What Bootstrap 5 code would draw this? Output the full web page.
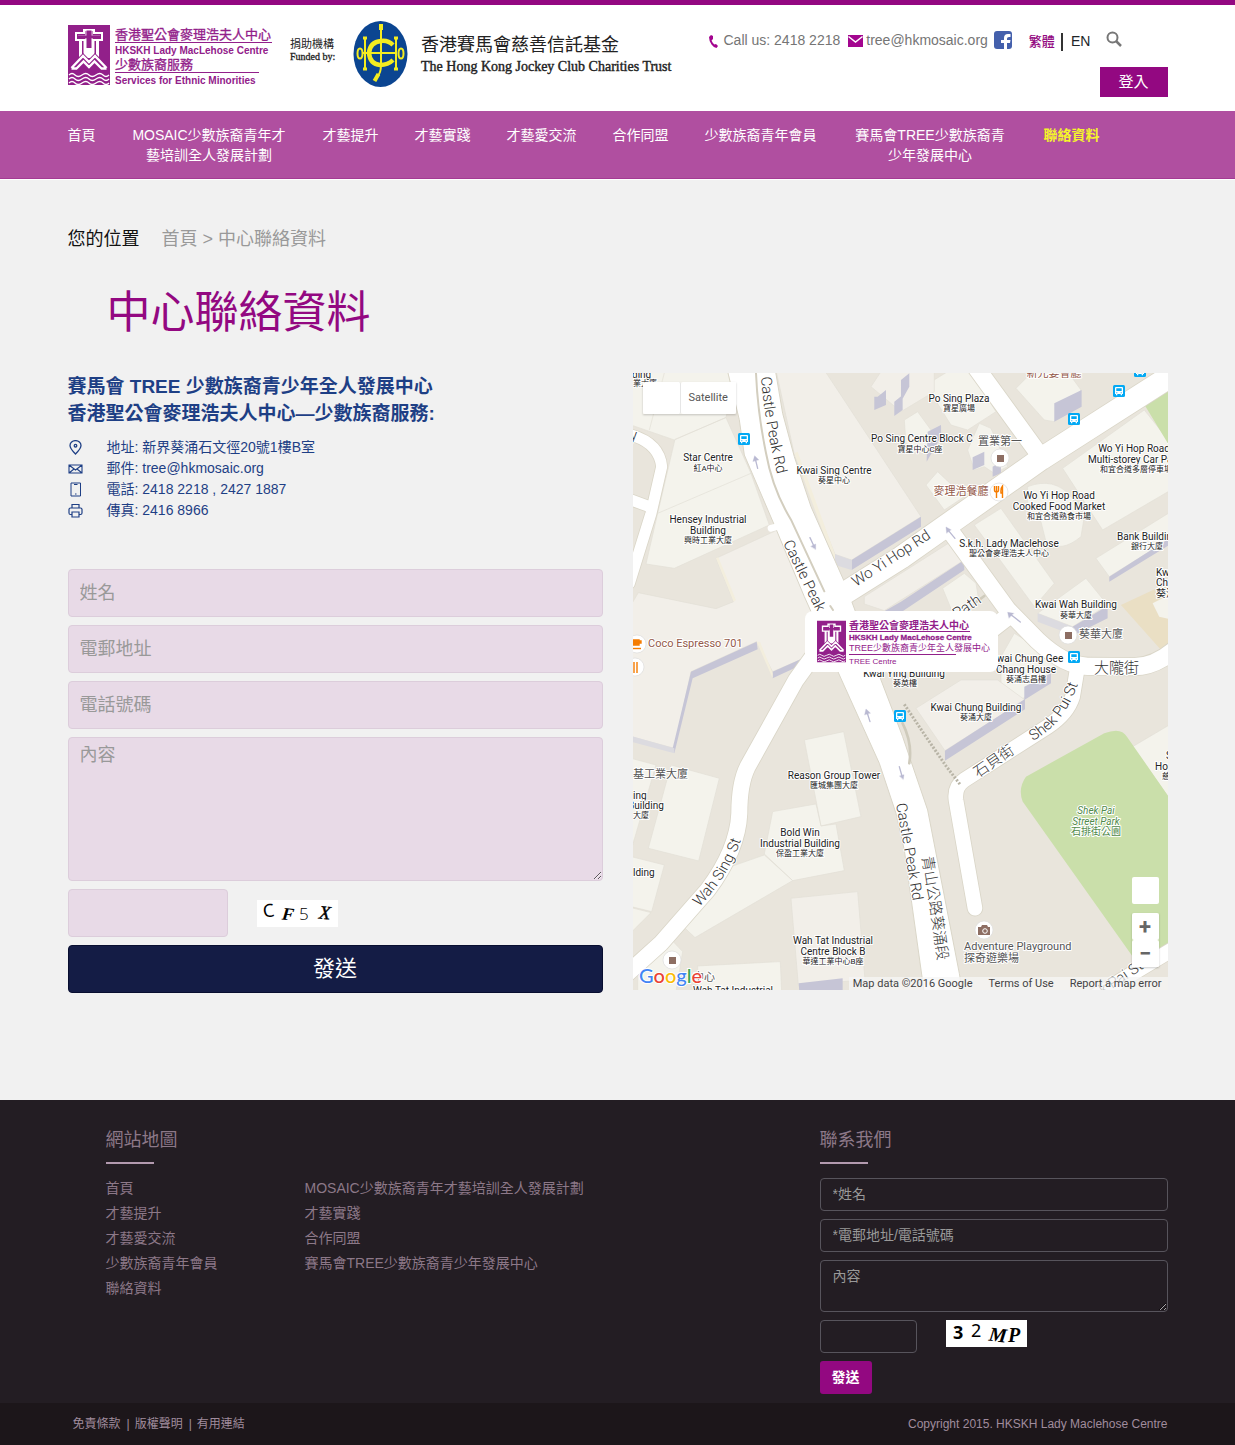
<!DOCTYPE html>
<html lang="zh-Hant">
<head>
<meta charset="utf-8">
<meta name="viewport" content="width=device-width, initial-scale=1">
<title>中心聯絡資料</title>
<link href="https://cdn.jsdelivr.net/npm/bootstrap@5.3.0/dist/css/bootstrap.min.css" rel="stylesheet">
<style>
  :root { --brand: #930881; --navy: #1e3f85; }
  body { font-family: "Liberation Sans", "Noto Sans CJK TC", sans-serif; font-size: 14px; line-height: 21px; background: #f1f1f1; color: #111; }
  a { text-decoration: none; color: inherit; }
  .site-wrap { max-width: 1124px; }

  .site-head { background: #fff; border-top: 5px solid var(--brand); min-height: 111px; }
  .head-logos { padding-top: 16px; }
  .head-side { width: 460px; padding-top: 25px; }
  .head-contact { color: #757575; }
  .head-contact > .line-icon { margin-top: 5px; }
  .fb-link { margin-left: 6px; }
  .lang-switch { margin: 1px 0 0 17px; }
  .lang-switch .lang-now { color: var(--brand); font-size: 13px; font-weight: 500; border-right: 2px solid #333; padding-right: 6px; line-height: 18px; }
  .search-btn { margin-left: 16px; }
  .login-btn { background: var(--brand); color: #fff; border: 0; border-radius: 0; font-size: 15px; line-height: 20px; width: 68px; padding: 5px 0; margin-top: 15px; }

  .main-nav { background: #b04fa0; border-bottom: 1px solid #a43a93; box-shadow: 0 1px 0 #fff; color: #fff; padding: 14px 0 13px; line-height: 20px; }
  .main-nav ul { gap: 10px 36px; }
  .main-nav li { max-width: 155px; text-align: center; }
  .main-nav .here { color: #f5f52a; font-weight: 700; }

  .page-main { padding-top: 46px; padding-bottom: 107px; }
  .crumbs { font-size: 18px; line-height: 28px; gap: 22px; }
  .crumbs nav { color: #999; }
  .page-title { color: var(--brand); font-size: 44px; line-height: 60px; font-weight: 400; margin: 30px 0 30px 39px; }
  .main-row { --bs-gutter-x: 30px; }
  .org-name { color: var(--navy); font-size: 19px; line-height: 27px; font-weight: 700; margin-bottom: 10px; }
  .org-list { color: var(--navy); margin-bottom: 48px; }
  .org-list li { gap: 24px; }

  .msg-form { gap: 8px; }
  .msg-form .form-control { background: #e8dae7; border-color: #dccddb; border-radius: 4px; font-size: 18px; line-height: 24px; padding: 11px; color: #333; }
  .msg-form textarea.form-control { height: 144px; padding-top: 5px; }
  .msg-form ::placeholder { color: #999; }
  .msg-form .code-box { width: 160px; }
  .code-row { gap: 29px; }
  .send-btn { background: #141c45; border: 1px solid #080e30; color: #fff; border-radius: 4px; font-size: 22px; line-height: 30px; padding: 8px; }

  .map-box { position: relative; overflow: hidden; }
  .map-box > svg { display: block; width: 100%; height: auto; }
  .map-btn { background: #fff; border: 0; border-radius: 2px; color: #565656; font-family: Roboto, sans-serif; font-size: 11px; line-height: 16px; padding: 8px; }
  .map-kinds { position: absolute; left: 10px; top: 9px; box-shadow: 0 1px 2px rgba(0,0,0,.2); }
  .map-kinds .map-btn:first-child { width: 38px; border-right: 1px solid #e6e6e6; }
  .map-tools { position: absolute; right: 9px; bottom: 23px; gap: 9px; }
  .map-tools .map-btn, .map-tools .zoom-set { width: 27px; }
  .map-tools .map-btn { height: 27px; padding: 0; font-size: 22px; line-height: 24px; font-weight: 700; color: #666; }
  .map-tools .zoom-set { box-shadow: 0 1px 2px rgba(0,0,0,.2); }
  .map-foot { position: absolute; right: 0; bottom: 0; background: rgba(245,245,245,.75); font-family: Roboto, sans-serif; font-size: 11px; line-height: 13px; color: #444; padding: 0 6px 0 4px; gap: 16px; }

  .lab { font-family: Roboto, "Noto Sans CJK TC", sans-serif; font-size: 10px; fill: #222; stroke: #fff; stroke-width: 2px; stroke-linejoin: round; paint-order: stroke; text-anchor: middle; }
  .lab .zh { font-size: 8px; }
  .lab .st { text-anchor: start; }
  .lab .grey { fill: #555; font-size: 11px; }
  .lab .food { fill: #94594a; font-size: 11px; }
  .lab .park { fill: #4f8a4a; }
  .lab .road { font-size: 15px; fill: #333; text-anchor: start; font-weight: 300; }

  .site-foot { background: #231d23; color: #8c7888; }
  .foot-top { padding-top: 28px; padding-bottom: 9px; }
  .foot-map { padding-left: 38px; }
  .foot-title { font-size: 18px; line-height: 24px; font-weight: 400; margin: 0; }
  .foot-title::after { content: ""; display: block; width: 48px; height: 2px; background: #b39aaf; margin-top: 10px; }
  .foot-links { gap: 87px; margin-top: 12px; line-height: 25px; }
  .foot-form { width: 348px; }
  .foot-fields { gap: 8px; margin-top: 14px; }
  .foot-fields .form-control { background: transparent; border: 1px solid #57545c; border-radius: 4px; color: #bbb; font-size: 14px; line-height: 21px; padding: 5px 12px; }
  .foot-fields textarea.form-control { height: 52px; min-height: 0; }
  .foot-fields ::placeholder { color: #999; }
  .foot-fields .code-box { width: 97px; }
  .foot-send { background: var(--brand); color: #fff; border: 0; border-radius: 3px; font-size: 14px; line-height: 21px; font-weight: 700; padding: 6px 12px; }
  .foot-bar { background: #1c161a; font-size: 12px; line-height: 18px; padding: 12px 0; color: #a08c9d; }
  .foot-bar ul { gap: 6px; padding-left: 5px; }
  .foot-bar li + li::before { content: "|"; margin-right: 5px; }
</style>
<script src="https://cdn.jsdelivr.net/npm/bootstrap@5.3.0/dist/js/bootstrap.bundle.min.js"></script>
</head>
<body>
<svg width="0" height="0" class="position-absolute" aria-hidden="true">
  <symbol id="emblem" viewBox="0 0 42 60">
    <path fill="#92208a" d="M0 0h42v60H0z"/>
    <path fill="#fff" d="M15 4h12v3h8v9h-4v17H11V16H7V7h8z"/>
    <path fill="#92208a" d="M9 9h8V6h8v3h8v5H9z"/>
    <path fill="#fff" d="M10 10.500h22v1.500H10zM17.500 6h1.200v8h-1.200zM23.300 6h1.200v8h-1.200z"/>
    <path fill="#92208a" d="M9.500 10.500h9V5.500h5v5h9v2.500h-9v10h-5V13h-9zM14 16h1.500v14H14zM26.500 16H28v14h-1.500z"/>
    <path fill="none" stroke="#92208a" stroke-width="7" d="M6 42l9-9 6 6 6-6 9 9"/>
    <path fill="none" stroke="#fff" stroke-width="2.400" d="M3.500 43L15 31l6 6 6-6 11.500 12M8 44l7.500-7.500L21 42l5.500-5.500L34 44M3.500 43.500H9M33 43.500h5.500"/>
    <path fill="none" stroke="#fff" stroke-width="1.300" d="M1 50q3-3 6 0t7 0 7 0 7 0 7 0 6 0M1 54q3-3 6 0t7 0 7 0 7 0 7 0 6 0M1 58q3-3 6 0t7 0 7 0 7 0 7 0 6 0"/>
  </symbol>
  <symbol id="bus" viewBox="0 0 12 12">
    <rect width="12" height="12" rx="1.500" fill="#03a9f4"/>
    <path fill="#fff" d="M3 2h6q1 0 1 1v6H9v1.300H7.700V9H4.300v1.300H3V9H2V3q0-1 1-1z"/>
    <path fill="#03a9f4" d="M3.300 3.200h5.400V6H3.300zM3.300 7.200h1v1h-1zM7.700 7.200h1v1h-1z"/>
  </symbol>
</svg>

<header class="site-head">
  <div class="container-xxl site-wrap d-flex justify-content-between">
    <a href="#" class="head-logos" aria-label="香港聖公會麥理浩夫人中心">
      <svg width="620" height="72" viewBox="0 0 620 72" role="img">
        <use href="#emblem" y="4" width="42" height="60"/>
        <g fill="#92208a" font-family="'Liberation Sans','Noto Sans CJK TC',sans-serif">
          <text x="47" y="18" font-size="13" stroke="#92208a" stroke-width=".3">香港聖公會麥理浩夫人中心</text>
          <path d="M47 21h157v1H47zM47 51h144v1H47z"/>
          <text x="47" y="33" font-size="10" font-weight="700">HKSKH Lady MacLehose Centre</text>
          <text x="47" y="48" font-size="13" stroke="#92208a" stroke-width=".3">少數族裔服務</text>
          <text x="47" y="63" font-size="10" font-weight="700">Services for Ethnic Minorities</text>
        </g>
        <g fill="#222" font-family="'Liberation Serif','Noto Sans CJK TC',serif">
          <text x="222" y="27" font-size="11">捐助機構</text>
          <text x="222" y="39" font-size="10" stroke="#222" stroke-width=".3">Funded by:</text>
          <text x="353" y="30" font-size="18">香港賽馬會慈善信託基金</text>
          <text x="353" y="50" font-size="14" stroke="#222" stroke-width=".4">The Hong Kong Jockey Club Charities Trust</text>
        </g>
        <ellipse cx="312.500" cy="33" rx="27" ry="33" fill="#0b4591"/>
        <g fill="none" stroke="#f4ec20">
          <path stroke-width="4.500" d="M325 24q-5-5-12-4-11 1-12 12 1 11 11 12 8 0 13-5"/>
          <path stroke-width="2" d="M313 4v40q0 8-4 12M297 17v31M328 17v31M294 32h34"/>
          <path stroke-width="4" d="M313 3v6M310.500 53l-4 7"/>
          <ellipse cx="292" cy="32.500" rx="2.500" ry="5" stroke-width="2"/>
          <ellipse cx="333" cy="32.500" rx="2.500" ry="5" stroke-width="2"/>
          <path stroke-width="3" d="M295 17h4M295 48h4M326 17h4M326 48h4"/>
        </g>
      </svg>
    </a>
    <div class="head-side">
      <div class="head-contact d-flex align-items-start">
        <svg class="line-icon me-1" width="12" height="14" viewBox="0 0 12 14" aria-hidden="true"><path fill="#a3058f" d="M1 2l2-2 2 1v3L3.500 5.500Q4.500 8 6.500 9.500L8 9l2 2-1.500 2Q6 13 3.500 9.500T1 2z"/></svg>
        <a href="tel:24182218">Call us: 2418 2218</a>
        <svg class="line-icon ms-2" width="18" height="12" viewBox="0 0 18 12" aria-hidden="true"><path fill="#a3058f" d="M0 0h15v12H0z"/><path fill="none" stroke="#fff" stroke-width="1.500" d="M.5 1.500l7 5.500 7-5.500"/></svg>
        <a href="mailto:tree@hkmosaic.org">tree@hkmosaic.org</a>
        <a href="#" class="fb-link" aria-label="Facebook"><svg class="d-block" width="18" height="20" viewBox="0 0 18 20"><rect y="1" width="18" height="18" rx="3" fill="#4460ac"/><path fill="#fff" d="M10 19v-6H7v-3h3V8q0-4 4-4h2.500v3H15q-2 0-2 1.500V10h3.500l-.5 3h-3v6z"/></svg></a>
        <div class="lang-switch d-flex align-items-center text-dark"><a href="#" class="lang-now">繁體</a><a href="#" class="ps-2">EN</a></div>
        <button type="button" class="search-btn btn p-0 border-0" aria-label="搜尋"><svg class="d-block" width="16" height="18" viewBox="0 0 16 18"><circle cx="6.500" cy="7.500" r="5" fill="none" stroke="#777" stroke-width="2"/><path stroke="#777" stroke-width="2.500" d="M10 11l5 5"/></svg></button>
      </div>
      <div class="d-flex justify-content-end"><button type="button" class="btn login-btn">登入</button></div>
    </div>
  </div>
</header>

<nav class="main-nav">
  <div class="container-xxl site-wrap">
    <ul class="list-unstyled d-flex flex-wrap flex-lg-nowrap mb-0">
      <li><a href="#">首頁</a></li>
      <li><a href="#">MOSAIC少數族裔青年才藝培訓全人發展計劃</a></li>
      <li><a href="#">才藝提升</a></li>
      <li><a href="#">才藝實踐</a></li>
      <li><a href="#">才藝愛交流</a></li>
      <li><a href="#">合作同盟</a></li>
      <li><a href="#">少數族裔青年會員</a></li>
      <li><a href="#">賽馬會TREE少數族裔青少年發展中心</a></li>
      <li><a href="#" class="here">聯絡資料</a></li>
    </ul>
  </div>
</nav>

<main class="container-xxl site-wrap page-main">
  <div class="crumbs d-flex"><span>您的位置</span><nav aria-label="您的位置"><a href="#">首頁</a> &gt; <a href="#">中心聯絡資料</a></nav></div>
  <h1 class="page-title">中心聯絡資料</h1>
  <div class="row main-row">
    <section class="col-12 col-lg-6">
      <h2 class="org-name">賽馬會 TREE 少數族裔青少年全人發展中心<br>香港聖公會麥理浩夫人中心—少數族裔服務:</h2>
      <ul class="org-list list-unstyled">
        <li class="d-flex align-items-center"><svg width="15" height="15" viewBox="0 0 15 15" fill="none" stroke="#1e3f85" stroke-width="1.300" aria-hidden="true"><path d="M7.500 14Q2 8.500 2 5.500a5.300 4.700 0 0 1 11 0Q13 8.500 7.500 14z"/><circle cx="7.500" cy="5.700" r="1.300"/></svg><span>地址: 新界葵涌石文徑20號1樓B室</span></li>
        <li class="d-flex align-items-center"><svg width="15" height="15" viewBox="0 0 15 15" fill="none" stroke="#1e3f85" stroke-width="1.100" aria-hidden="true"><path d="M1 4h13v8H1zM1 4l6.500 5L14 4M1 12l5-4M14 12L9 8"/></svg><span>郵件: <a href="mailto:tree@hkmosaic.org">tree@hkmosaic.org</a></span></li>
        <li class="d-flex align-items-center"><svg width="15" height="15" viewBox="0 0 15 15" fill="none" stroke="#1e3f85" aria-hidden="true"><path d="M3 1h9.500v13H3zM6 2.500h3.500M7 12h1.500"/></svg><span>電話: 2418 2218 , 2427 1887</span></li>
        <li class="d-flex align-items-center"><svg width="15" height="15" viewBox="0 0 15 15" fill="none" stroke="#1e3f85" stroke-width="1.200" aria-hidden="true"><path d="M4 5V1.500h7V5M4 11.500H2.500Q1 11.500 1 10V6.500Q1 5 2.500 5h10Q14 5 14 6.500V10q0 1.500-1.500 1.500H11M4 9h7v5H4z"/></svg><span>傳真: 2416 8966</span></li>
      </ul>
      <form class="msg-form d-flex flex-column">
        <input type="text" class="form-control" placeholder="姓名" aria-label="姓名">
        <input type="email" class="form-control" placeholder="電郵地址" aria-label="電郵地址">
        <input type="tel" class="form-control" placeholder="電話號碼" aria-label="電話號碼">
        <textarea class="form-control" placeholder="內容" aria-label="內容"></textarea>
        <div class="code-row d-flex align-items-center">
          <input type="text" class="form-control code-box" aria-label="驗證碼">
          <svg width="81" height="27" viewBox="0 0 81 27" role="img" aria-label="驗證碼圖片" font-family="'Liberation Serif',serif"><path fill="#fff" d="M0 0h81v27H0z"/><text x="6" y="17" font-size="18" font-family="'Noto Sans',sans-serif" transform="rotate(-8 12 12)">C</text><text x="25" y="20" font-size="18" font-weight="700" font-style="italic" transform="rotate(6 30 14)">F</text><text x="42" y="20" font-size="17" font-family="'Open Sans',sans-serif" font-weight="300">5</text><text x="62" y="19" font-size="19" font-style="italic" transform="rotate(5 68 12)" stroke="#000" stroke-width=".4">X</text></svg>
        </div>
        <button type="submit" class="btn send-btn">發送</button>
      </form>
    </section>

    <section class="col-12 col-lg-6">
      <div class="map-box">
        <svg viewBox="0 0 535 617" role="img" aria-label="地圖">
          <rect width="535" height="617" fill="#e9e5dc"/>
          <!-- map geometry, drawn on a grid three times finer than the labels -->
          <g transform="translate(-2 -3) scale(.3333)">
            <g fill="#f4f3ec" stroke="#e2e0d6" stroke-width="2">
              <path d="M0 0h320l-35 142-155 68L0 165zM55 180l45-171M285 143l75 167 55 155-285 130-85-13 35-152 52-222zM80 430l280-120"/>
              <path d="M885 45l65-40h70l75 120-85 55-50-15zM1155 55l50-50h105l40 55-80 95-30-5zM820 150l40-25 40 55 30-10v40l-45 40-60-30zM1010 240l35-80 35 15 50 115-40 20-30-20-30 10zM885 345l35-40 80 75-60 40z"/>
              <path d="M1295 295l245-175 80 100v140l-205 120zM1190 350q80-30 130 30l40 60-10 60q-60 50-105 15l-15-60-40-20zM1030 465l80-50 160 225-60 70zM1395 565l225-140v80l-185 115zM1220 730l145-105 65 80-105 65zM935 655l65-45 35 30 10 60-75 40zM1110 860l40-70 130 80-30 60-80 60-60-40z"/>
              <path d="M520 1110l118-25 52 255-120 28zM425 1325l130-23 15 66 45-6 25 140-155 30-85-80zM400 1455l85 77-293 171-40-38 70-85 78-90zM200 1788l248-13 4 90H200zM120 1185l145 40-62 248-151-38zM0 1165l75 20-70 240zM0 1460l100 25-38 140-62-15zM0 1613l60 15-60 60zM120 1708l35 37-20 120H20l0-60zM1505 1130l110-65v220z"/>
              <path fill="#f2efe9" d="M255 565l195-90 110 245-30 140-105 45-48-90-197 90-50 230-130-35V705l22-37 233 48 53-21zM435 0h145l290 440-208 130-50-17-122-300zM720 50l30-45h160v60l-100 60zM700 680l260-165 40 55-240 152-60-20zM480 1585l200-20 22 265-200 15zM855 1015l135-85h110l82 60-240 152z"/>
            </g>
            <g fill="#c6c5d6">
              <path d="M662 570l208-130v30L662 600zM377 815l3 23-195 87-55 225-5-15 55-230zM425 905l97-43v18l-97 45zM1270 100l82-40v50l-82 45zM740 80l25-20v45l-35 15v-40zM790 95l25-20v45l-25 18zM890 185l40-20v35l-43 75zM1025 262l35-17v40l-35 15zM1085 290l25-15v35l-25 10zM810 695l190-125v30L815 724h-55zM1435 620l180-115v20l-180 110zM1325 770l105-62v37l-90 45zM942 1142l240-155v31l-240 154zM1180 950l80-40v30l-80 50zM503 1840l132-15v40H505zM810 30l25-20v40l-25 45z"/>
              <path fill="#dcdbe0" d="M612 553l50 17v30l-50-15zM0 1098l130 37v15L0 1115zM1220 730l105 40v25l-105-40z"/>
              <path fill="#f3eedd" d="M255 565l7-3 53 128-7 5zM490 250l10-5 112 308v32zM377 815l10 0 38 95v15z"/>
            </g>
            <path fill="#eadfc4" d="M1470 705l150-70v205l-25 5z"/><path fill="#f4f3ec" d="M1565 700l60-30v80l-40-10z"/>
            <path fill="#cadfaa" d="M1535 95l85-50v190zM1185 1220l235-130q50-20 68 10l132 190v445l-115 25-330-465q-15-40 10-75z"/>
            <g fill="none" stroke-linecap="round" stroke-linejoin="round">
              <g stroke="#dad6c8">
                <path stroke-width="72" d="M600 695l210-132 150-106 270-190L1640 5"/>
                <path stroke-width="57" d="M1030-15l185 255M945 465l185 255 90 92q80 75 150 77l140 1q60 0 120-50M1130 740l-90 70"/>
                <path stroke-width="49" d="M1340 890l-15 90q-15 50-75 90l-250 160q-30 20-25 60l57 325M1390 1880l240-145"/>
                <path stroke-width="53" d="M560 840l-65 90-145 260q-25 50-25 140-5 110-95 230L90 1720l-100 90"/>
                <path stroke-width="38" d="M0 195q85 25 92 95L60 430-5 640M0 390l55 20"/>
              </g>
              <path fill="#fff" stroke="#dad6c8" stroke-width="3" d="M290 0h143l22 130 35 130 50 150 100 225 110 295 65 170 75 220 95 490 10 60H880l-60-430-25-110-50-150-113-250-112-250-90-215-90-210-15-105z"/>
              <g stroke="#fff">
                <path stroke-width="67" d="M600 695l210-132 150-106 270-190L1640 5"/>
                <path stroke-width="52" d="M1030-15l185 255M945 465l185 255 90 92q80 75 150 77l140 1q60 0 120-50M1130 740l-90 70"/>
                <path stroke-width="44" d="M1340 890l-15 90q-15 50-75 90l-250 160q-30 20-25 60l57 325M1390 1880l240-145"/>
                <path stroke-width="48" d="M560 840l-65 90-145 260q-25 50-25 140-5 110-95 230L90 1720l-100 90"/>
                <path stroke-width="33" d="M0 195q85 25 92 95L60 430-5 640M0 390l55 20"/>
              </g>
              <path stroke="#d3cebf" stroke-width="6" d="M375 9q5 120 30 240 20 110 75 200l100 215M598 708l8 12"/>
              <path stroke="#fff" stroke-width="20" d="M420 475l30-8"/>
              <path stroke="#b8b4a6" stroke-width="9" stroke-linecap="butt" stroke-dasharray="6 5" d="M820 1003l60 90 65 95 42 55"/>
              <path stroke="#cfcbbc" stroke-width="8" d="M815 1060q30 60 20 120M1030 700l30-22"/>
              <g fill="#b9b9d2" stroke="#b9b9d2" stroke-width="4">
                <path d="M380 295l-8-32M537 503l12 26M717 1055l-10-32M805 1190l8 28M972 505l-20-24M1168 756l-26-20"/>
                <path stroke-width="1" d="M366 274l5-17 12 12zM540 529l14-7 0 16zM701 1034l4-17 13 12zM806 1218l13-4-2 14zM947 489l-2-18 15 8zM1134 744l-4-17 18 3z"/>
              </g>
            </g>
          </g>
          <use href="#bus" x="105" y="60" width="12" height="12"/><use href="#bus" x="435" y="40" width="12" height="12"/><use href="#bus" x="480" y="12" width="12" height="12"/><use href="#bus" x="501" y="-8" width="12" height="12"/><use href="#bus" x="435" y="278" width="12" height="12"/><use href="#bus" x="261" y="337" width="12" height="12"/>
          <g fill="#fff" stroke="#ddd" stroke-width=".7"><circle cx="367" cy="85" r="9"/><circle cx="366" cy="119" r="9"/><circle cx="4" cy="271" r="9"/><circle cx="2" cy="294" r="9"/><circle cx="435" cy="262" r="9"/><circle cx="39" cy="587" r="9"/><circle cx="351" cy="557" r="9"/></g>
          <path fill="#8d6e63" d="M364 82h7v7h-7zM432 259h7v7h-7zM36 584h7v7h-7zM345 554h3l1-2h5l1 2h2v8h-12z"/><circle cx="352" cy="558" r="2.300" fill="#8d6e63" stroke="#fff"/>
          <g fill="none" stroke="#f57c00" stroke-width="1.400"><path d="M361.500 113v4q0 2 2 2t2-2v-4M363.500 113v12M369.500 125v-12q-2 2-1.500 7h1.500M1 289v11M4 300v-11"/><path fill="#f57c00" d="M0 267h6v5H0zM6 268h2v2H6z"/><path d="M-1 275.500h9"/></g>

          <g class="lab">
            <text x="75" y="88">Star Centre</text><text class="zh" x="75" y="98">紅A中心</text>
            <text x="201" y="101">Kwai Sing Centre</text><text class="zh" x="201" y="110">葵星中心</text>
            <text x="75" y="150">Hensey Industrial</text><text x="75" y="161">Building</text><text class="zh" x="75" y="170">興時工業大廈</text>
            <text class="st food" x="15" y="274">Coco Espresso 701</text>
            <text x="326" y="29">Po Sing Plaza</text><text class="zh" x="326" y="38">寶星廣場</text>
            <text x="289" y="69">Po Sing Centre Block C</text><text class="zh" x="287" y="79">寶星中心C座</text>
            <text class="grey" x="367" y="72">置業第一</text><text class="food" x="328" y="122">麥理浩餐廳</text><text class="food" x="421" y="4">新光宴會廳</text>
            <text x="501" y="79">Wo Yi Hop Road</text><text class="st" x="455" y="90">Multi-storey Car Park</text><text class="zh st" x="467" y="99">和宜合道多層停車場</text>
            <text x="426" y="126">Wo Yi Hop Road</text><text x="426" y="137">Cooked Food Market</text><text class="zh" x="426" y="146">和宜合道熟食市場</text>
            <text x="376" y="174">S.k.h. Lady Maclehose</text><text class="zh" x="376" y="183">聖公會麥理浩夫人中心</text>
            <text class="st" x="484" y="167">Bank Building</text><text class="zh" x="514" y="176">銀行大廈</text>
            <text class="st" x="523" y="203">Kwai</text><text class="st" x="523" y="213">Chung</text><text class="st" x="523" y="224">葵涌</text>
            <text x="443" y="235">Kwai Wah Building</text><text class="zh" x="443" y="245">葵華大廈</text><text class="grey st" x="446" y="265">葵華大廈</text>
            <text x="394" y="289">Kwai Chung Gee</text><text x="393" y="300">Chang House</text><text class="zh" x="393" y="309">葵涌志昌樓</text>
            <text x="271" y="304">Kwai Ying Building</text><text class="zh" x="272" y="313">葵英樓</text>
            <text x="201" y="406">Reason Group Tower</text><text class="zh" x="201" y="415">匯城集團大廈</text>
            <text x="167" y="463">Bold Win</text><text x="167" y="474">Industrial Building</text><text class="zh" x="167" y="483">保盈工業大廈</text>
            <text x="200" y="571">Wah Tat Industrial</text><text x="200" y="582">Centre Block B</text><text class="zh" x="200" y="591">華達工業中心B座</text>
            <text x="100" y="621">Wah Tat Industrial</text><text class="grey st" x="60" y="608">中心</text>
            <text class="grey st" x="0" y="405">基工業大廈</text><text class="st" x="0" y="426">ing</text><text class="st" x="-5" y="436">Building</text><text class="zh st" x="0" y="445">大廈</text><text class="st" x="0" y="503">lding</text>
            <text class="st" x="-1" y="5">ding</text><text class="zh st" x="0" y="13">業大廈</text>
            <text x="343" y="338">Kwai Chung Building</text><text class="zh" x="343" y="347">葵涌大廈</text>
            <text class="park" x="463" y="441" font-style="italic">Shek Pai</text><text class="park" x="463" y="452" font-style="italic">Street Park</text><text class="park" x="463" y="462">石排街公園</text>
            <text class="grey st" x="331" y="577">Adventure Playground</text><text class="grey st" x="331" y="589">探奇遊樂場</text>
            <text class="st" x="533" y="386">S</text><text class="st" x="522" y="397">Hong</text><text class="zh st" x="529" y="406">慈</text>
            <text class="road" x="461" y="300">大隴街</text>
            <path id="r1" d="M128 4Q132 55 147 112" fill="none" stroke="none"/><text class="road"><textPath href="#r1">Castle Peak Rd</textPath></text>
            <path id="r2" d="M150 170l40 82" fill="none" stroke="none"/><text class="road"><textPath href="#r2">Castle Peak</textPath></text>
            <path id="r3" d="M263 431q10 55 20 115" fill="none" stroke="none"/><text class="road"><textPath href="#r3">Castle Peak Rd</textPath></text>
            <path id="r4" d="M289 484q10 60 18 120" fill="none" stroke="none"/><text class="road"><textPath href="#r4">青山公路葵涌段</textPath></text>
            <path id="r5" d="M223 214l95-62" fill="none" stroke="none"/><text class="road"><textPath href="#r5">Wo Yi Hop Rd</textPath></text>
            <path id="r6" d="M66 534Q98 502 110 460" fill="none" stroke="none"/><text class="road"><textPath href="#r6">Wah Sing St</textPath></text>
            <path id="r7" d="M400 368Q436 348 448 300" fill="none" stroke="none"/><text class="road"><textPath href="#r7">Shek Pui St</textPath></text>
            <path id="r8" d="M345 405l50-34" fill="none" stroke="none"/><text class="road"><textPath href="#r8">石貝街</textPath></text>
            <path id="r9" d="M470 622l70-46" fill="none" stroke="none"/><text class="road"><textPath href="#r9">k Pai St</textPath></text>
            <path id="r10" d="M324 246l40-27" fill="none" stroke="none"/><text class="road"><textPath href="#r10">Path</textPath></text>
            <text class="road" x="-3" y="67">y</text>
          </g>

          <rect x="172" y="238" width="193" height="61" rx="8" fill="#fff"/>
          <use href="#emblem" x="184" y="247" width="29" height="43"/>
          <g fill="#92208a" font-family="'Liberation Sans','Noto Sans CJK TC',sans-serif">
            <text x="216" y="256" font-size="10" font-weight="700">香港聖公會麥理浩夫人中心</text>
            <path d="M216 258h121v1H216zM216 281h107v1H216z"/>
            <text x="216" y="267" font-size="8" font-weight="700" stroke="#92208a" stroke-width=".3">HKSKH Lady MacLehose Centre</text>
            <text x="216" y="278" font-size="9">TREE少數族裔青少年全人發展中心</text>
            <text x="216" y="291" font-size="8">TREE Centre</text>
          </g>
          <text x="6" y="610" font-family="Lato,sans-serif" font-size="20" font-weight="500" stroke="#fff" stroke-width="2" paint-order="stroke"><tspan fill="#4285f4">G</tspan><tspan fill="#ea4335">o</tspan><tspan fill="#fbbc05">o</tspan><tspan fill="#4285f4">g</tspan><tspan fill="#34a853">l</tspan><tspan fill="#ea4335">e</tspan></text>
        </svg>
        <div class="map-kinds d-flex"><button type="button" class="map-btn" aria-label="地圖"></button><button type="button" class="map-btn">Satellite</button></div>
        <div class="map-tools d-flex flex-column">
          <button type="button" class="map-btn" aria-label="街景"></button>
          <div class="zoom-set d-flex flex-column"><button type="button" class="map-btn">+</button><button type="button" class="map-btn">−</button></div>
        </div>
        <div class="map-foot d-flex"><span>Map data ©2016 Google</span><a href="#">Terms of Use</a><a href="#">Report a map error</a></div>
      </div>
    </section>
  </div>
</main>

<footer class="site-foot">
  <div class="container-xxl site-wrap foot-top d-flex flex-wrap justify-content-between">
    <section class="foot-map">
      <h2 class="foot-title">網站地圖</h2>
      <div class="foot-links d-flex">
        <ul class="list-unstyled mb-0"><li><a href="#">首頁</a></li><li><a href="#">才藝提升</a></li><li><a href="#">才藝愛交流</a></li><li><a href="#">少數族裔青年會員</a></li><li><a href="#">聯絡資料</a></li></ul>
        <ul class="list-unstyled mb-0"><li><a href="#">MOSAIC少數族裔青年才藝培訓全人發展計劃</a></li><li><a href="#">才藝實踐</a></li><li><a href="#">合作同盟</a></li><li><a href="#">賽馬會TREE少數族裔青少年發展中心</a></li></ul>
      </div>
    </section>
    <section class="foot-form">
      <h2 class="foot-title">聯系我們</h2>
      <form class="foot-fields d-flex flex-column">
        <input type="text" class="form-control" placeholder="*姓名" aria-label="姓名">
        <input type="text" class="form-control" placeholder="*電郵地址/電話號碼" aria-label="電郵地址/電話號碼">
        <textarea class="form-control" placeholder="內容" aria-label="內容"></textarea>
        <div class="code-row d-flex align-items-start">
          <input type="text" class="form-control code-box" aria-label="驗證碼">
          <svg width="81" height="27" viewBox="0 0 81 27" role="img" aria-label="驗證碼圖片" font-family="'Noto Sans',sans-serif"><path fill="#fff" d="M0 0h81v27H0z"/><text x="7" y="19" font-size="18" font-weight="700">3</text><text x="25" y="17" font-size="18">2</text><text x="43" y="22" font-size="20" font-weight="700" font-style="italic" font-family="'Liberation Serif',serif" transform="rotate(7 54 15)">M</text><text x="62" y="22" font-size="20" font-weight="700" font-style="italic" font-family="'Liberation Serif',serif">P</text></svg>
        </div>
        <div><button type="submit" class="btn foot-send d-block">發送</button></div>
      </form>
    </section>
  </div>
  <div class="foot-bar">
    <div class="container-xxl site-wrap d-flex flex-wrap justify-content-between">
      <ul class="list-unstyled d-flex mb-0"><li><a href="#">免責條款</a></li><li><a href="#">版權聲明</a></li><li><a href="#">有用連結</a></li></ul>
      <span>Copyright 2015. HKSKH Lady Maclehose Centre</span>
    </div>
  </div>
</footer>
</body>
</html>
